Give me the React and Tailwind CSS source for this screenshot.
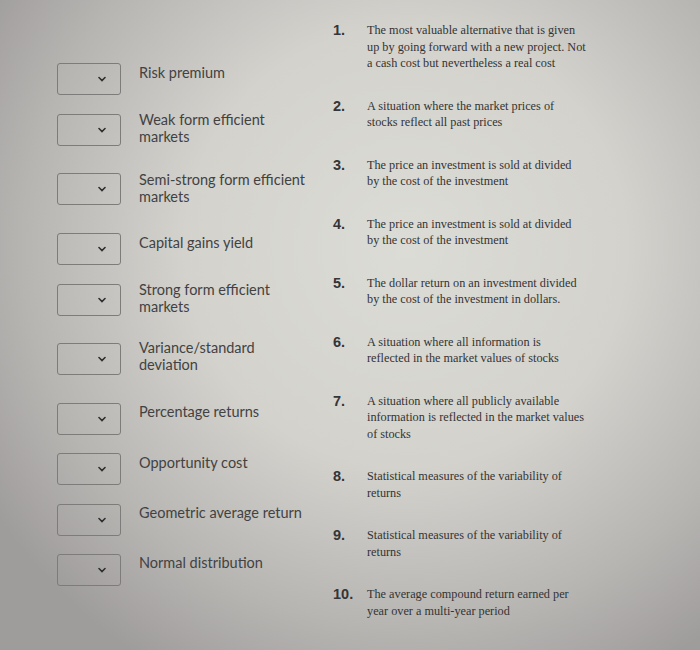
import React from "react";

const terms = [
  { label: ["Risk premium"], h: "h-[51px]", mt: "mt-[1px]" },
  { label: ["Weak form efficient", "markets"], h: "h-[59px]", mt: "-mt-[3px]" },
  { label: ["Semi-strong form efficient", "markets"], h: "h-[60px]", mt: "-mt-[2px]" },
  { label: ["Capital gains yield"], h: "h-[51px]", mt: "mt-[1px]" },
  { label: ["Strong form efficient", "markets"], h: "h-[59px]", mt: "-mt-[3px]" },
  { label: ["Variance/standard", "deviation"], h: "h-[60px]", mt: "-mt-[4px]" },
  { label: ["Percentage returns"], h: "h-[50px]", mt: "mt-0" },
  { label: ["Opportunity cost"], h: "h-[51px]", mt: "mt-[1px]" },
  { label: ["Geometric average return"], h: "h-[50px]", mt: "mt-0" },
  { label: ["Normal distribution"], h: "h-[50px]", mt: "mt-0" },
];

const definitions = [
  ["The most valuable alternative that is given", "up by going forward with a new project. Not", "a cash cost but nevertheless a real cost"],
  ["A situation where the market prices of", "stocks reflect all past prices"],
  ["The price an investment is sold at divided", "by the cost of the investment"],
  ["The price an investment is sold at divided", "by the cost of the investment"],
  ["The dollar return on an investment divided", "by the cost of the investment in dollars."],
  ["A situation where all information is", "reflected in the market values of stocks"],
  ["A situation where all publicly available", "information is reflected in the market values", "of stocks"],
  ["Statistical measures of the variability of", "returns"],
  ["Statistical measures of the variability of", "returns"],
  ["The average compound return earned per", "year over a multi-year period"],
];

const Chevron = () => (
  <svg width="8" height="6" viewBox="0 0 8 6" className="text-[#2f2f2f]">
    <path d="M1 1.5 L4 4.5 L7 1.5" fill="none" stroke="currentColor" strokeWidth="1.6" strokeLinecap="round" />
  </svg>
);

export default function App() {
  return (
    <div className="w-[700px] h-[650px] overflow-hidden bg-[radial-gradient(ellipse_70%_75%_at_58%_38%,#dcdcd6_0%,#d3d2cd_45%,#b7b5b2_78%,#9f9c9c_100%)]">
      <div className="flex">
        {/* matching terms */}
        <div className="w-[333px] pl-[57px] pt-[63px] font-['Lato','Liberation_Sans',sans-serif] text-[14.5px] leading-[17px] text-[#424242]">
          {terms.map((t, i) => (
            <div key={i} className={`flex items-start ${t.h}`}>
              <div className="w-16 h-8 shrink-0 rounded-[3px] border border-[#7d7c7a] flex items-center justify-end pr-[14px]">
                <Chevron />
              </div>
              <div className={`ml-[18px] ${t.mt}`}>
                {t.label.map((l, j) => (
                  <div key={j} className="whitespace-nowrap">{l}</div>
                ))}
              </div>
            </div>
          ))}
        </div>

        {/* numbered definitions */}
        <div className="pt-[22px]">
          {definitions.map((lines, i) => (
            <div key={i} className="flex items-start mb-[26px]">
              <div className="w-[34px] shrink-0 font-['Liberation_Sans',sans-serif] text-[14.5px] leading-[16.5px] font-semibold text-[#353535]">
                {i + 1}.
              </div>
              <div className="font-['Liberation_Serif',serif] text-[12.25px] leading-[16.5px] text-[#333]">
                {lines.map((l, j) => (
                  <div key={j} className="whitespace-nowrap">{l}</div>
                ))}
              </div>
            </div>
          ))}
        </div>
      </div>
    </div>
  );
}
